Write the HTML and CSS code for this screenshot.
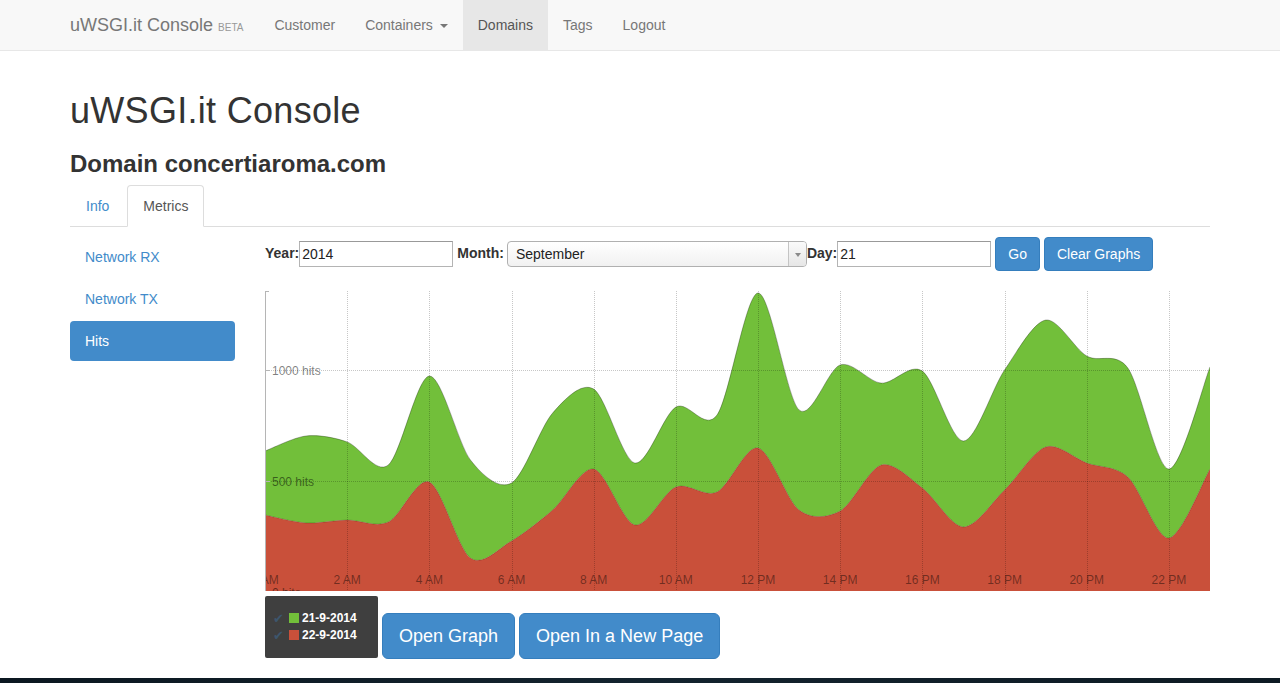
FILE: index.html
```html
<!DOCTYPE html>
<html lang="en">
<head>
<meta charset="utf-8">
<title>uWSGI.it Console</title>
<link rel="stylesheet" href="styles.css">
</head>
<body>
<div class="page">
  <nav class="navbar">
    <div class="container nav-inner">
      <a class="brand" href="#">uWSGI.it Console <small>BETA</small></a>
      <ul class="nav">
        <li><a href="#">Customer</a></li>
        <li><a href="#">Containers <span class="caret"></span></a></li>
        <li class="active"><a href="#">Domains</a></li>
        <li><a href="#">Tags</a></li>
        <li><a href="#">Logout</a></li>
      </ul>
    </div>
  </nav>

  <main class="container main">
    <h1 class="title">uWSGI.it Console</h1>
    <h3 class="subtitle">Domain concertiaroma.com</h3>

    <ul class="tabs">
      <li><a href="#">Info</a></li>
      <li class="active"><a href="#">Metrics</a></li>
    </ul>

    <div class="tab-body">
      <ul class="pills">
        <li><a href="#">Network RX</a></li>
        <li><a href="#">Network TX</a></li>
        <li class="active"><a href="#">Hits</a></li>
      </ul>

      <div class="panel-main">
        <form class="graph-form">
          <label class="lbl">Year:</label><input class="field field-year" type="text" value="2014">
          <label class="lbl lbl-month">Month:</label>
          <span class="select-wrap">
            <select class="select">
              <option>January</option><option>February</option><option>March</option>
              <option>April</option><option>May</option><option>June</option>
              <option>July</option><option>August</option><option selected>September</option>
              <option>October</option><option>November</option><option>December</option>
            </select>
          </span>
          <label class="lbl">Day:</label><input class="field" type="text" value="21">
          <button class="btn btn-go" type="button">Go</button>
          <button class="btn btn-clear" type="button">Clear Graphs</button>
        </form>

        <div class="chart">
          <svg id="chart" class="chart-svg" width="945" height="300" viewBox="0 0 945 300"></svg>
        </div>

        <div class="chart-footer">
          <div class="legend">
            <div class="legend-item"><span class="check">✔</span><span class="swatch swatch-green"></span><span>21-9-2014</span></div>
            <div class="legend-item"><span class="check">✔</span><span class="swatch swatch-red"></span><span>22-9-2014</span></div>
          </div>
          <button class="btn btn-lg" type="button">Open Graph</button>
          <button class="btn btn-lg" type="button">Open In a New Page</button>
        </div>
      </div>
    </div>
  </main>

  <div class="desk-strip"></div>
</div>
<script src="script.js"></script>
</body>
</html>
```

FILE: styles.css
```css
* { box-sizing: border-box; }

body {
  margin: 0;
  font-family: "Liberation Sans", Arial, sans-serif;
  font-size: 14px;
  line-height: 1.42857;
  color: #333;
  background: #fff;
}

a { text-decoration: none; }

.page {
  display: flex;
  flex-direction: column;
  min-height: 100vh;
}

.container {
  width: 1140px;
  margin: 0 auto;
}

/* navbar */
.navbar {
  flex: none;
  height: 51px;
  background: #f8f8f8;
  border-bottom: 1px solid #e7e7e7;
}
.nav-inner {
  display: flex;
  height: 50px;
}
.brand {
  padding: 15px 16px 15px 0;
  font-size: 18px;
  line-height: 20px;
  color: #777;
  white-space: nowrap;
}
.brand small {
  font-size: 10px;
  color: #999;
}
.nav {
  display: flex;
  list-style: none;
  margin: 0;
  padding: 0;
}
.nav a {
  display: block;
  padding: 15px;
  line-height: 20px;
  color: #777;
}
.nav .active a {
  background: #e7e7e7;
  color: #555;
}
.caret {
  display: inline-block;
  width: 0;
  height: 0;
  margin-left: 3px;
  vertical-align: middle;
  border-top: 4px solid;
  border-left: 4px solid transparent;
  border-right: 4px solid transparent;
}

/* main */
.main { flex: 1; }

.title {
  font-size: 36px;
  font-weight: normal;
  letter-spacing: 0.3px;
  line-height: 1.1;
  margin: 40px 0 10px;
}
.subtitle {
  font-size: 24px;
  font-weight: bold;
  line-height: 1.1;
  margin: 20px 0 8px;
}

.tabs {
  display: flex;
  list-style: none;
  margin: 0;
  padding: 0;
  border-bottom: 1px solid #ddd;
}
.tabs li { margin-bottom: -1px; }
.tabs a {
  display: block;
  padding: 10px 15px;
  line-height: 20px;
  margin-right: 2px;
  border: 1px solid transparent;
  border-radius: 4px 4px 0 0;
  color: #428bca;
}
.tabs .active a {
  color: #555;
  background: #fff;
  border-color: #ddd #ddd transparent;
}

.tab-body {
  display: flex;
  gap: 30px;
  margin-top: 10px;
}

.pills {
  flex: none;
  width: 165px;
  list-style: none;
  margin: 0;
  padding: 0;
}
.pills li + li { margin-top: 2px; }
.pills a {
  display: block;
  padding: 10px 15px;
  line-height: 20px;
  border-radius: 4px;
  color: #428bca;
}
.pills .active a {
  background: #428bca;
  color: #fff;
}

.panel-main {
  flex: none;
  width: 945px;
}

/* form */
.graph-form {
  display: flex;
  align-items: center;
  height: 34px;
  margin: 0;
}
.lbl {
  font-weight: bold;
  white-space: nowrap;
}
.field-year { margin-left: 1px; }
.lbl-month { margin-left: 4px; }

.field {
  width: 154px;
  height: 26px;
  margin: 0;
  padding: 1px 2px;
  border: 1px solid #b4b4b4;
  border-top-color: #999;
  font-family: "Liberation Sans", Arial, sans-serif;
  font-size: 14px;
  color: #222;
  background: #fff;
}

.select-wrap {
  position: relative;
  display: inline-block;
  margin-left: 3px;
  width: 300px;
  height: 26px;
}
.select {
  -webkit-appearance: none;
  appearance: none;
  width: 300px;
  height: 26px;
  margin: 0;
  padding: 0 24px 0 8px;
  border: 1px solid #b0b0b0;
  border-radius: 4px;
  background: linear-gradient(#ffffff, #f1f1f1);
  font-family: "Liberation Sans", Arial, sans-serif;
  font-size: 14px;
  color: #222;
}
.select-wrap::after {
  content: "";
  position: absolute;
  top: 1px;
  right: 1px;
  width: 17px;
  height: 24px;
  border-left: 1px solid #c4c4c4;
  border-radius: 0 3px 3px 0;
  background: linear-gradient(#fafafa, #e6e6e6);
  pointer-events: none;
}
.select-wrap::before {
  content: "";
  position: absolute;
  z-index: 1;
  top: 12px;
  right: 6px;
  border-top: 4px solid #8a8a8a;
  border-left: 3px solid transparent;
  border-right: 3px solid transparent;
  pointer-events: none;
}

.btn {
  display: inline-block;
  margin: 0;
  padding: 6px 12px;
  border: 1px solid #357ebd;
  border-radius: 4px;
  background: #428bca;
  color: #fff;
  font-family: "Liberation Sans", Arial, sans-serif;
  font-size: 14px;
  line-height: 20px;
  white-space: nowrap;
  cursor: pointer;
}
.btn-go { margin-left: 4px; }
.btn-clear { margin-left: 4px; }
.btn-lg {
  padding: 10px 16px;
  font-size: 18px;
  line-height: 24px;
  border-radius: 6px;
}

/* chart */
.chart {
  margin-top: 20px;
  height: 300px;
}
.chart-svg {
  display: block;
  overflow: hidden;
  font-family: "Liberation Sans", Arial, sans-serif;
}
.area-green { fill: #72bf3a; }
.area-red { fill: #c9503a; }
.line-green { fill: none; stroke: rgba(0, 0, 0, 0.28); stroke-width: 1; }
.line-red { fill: none; stroke: rgba(0, 0, 0, 0.18); stroke-width: 1; }
.grid { stroke: rgba(0, 0, 0, 0.22); stroke-width: 1; stroke-dasharray: 1 1; shape-rendering: crispEdges; }
.axis { stroke: #b5b5b5; stroke-width: 1; shape-rendering: crispEdges; }
.ylabel { font-size: 12px; fill: rgba(0, 0, 0, 0.5); }
.xlabel { font-size: 12px; fill: rgba(0, 0, 0, 0.45); }

.chart-footer {
  display: flex;
  align-items: flex-end;
  gap: 4px;
  margin-top: 5px;
}
.chart-footer .btn-lg { margin-bottom: -1px; }
.legend {
  flex: none;
  width: 113px;
  height: 62px;
  padding: 14px 0 0 8px;
  background: #3f3f3f;
  border-radius: 2px;
  color: #fff;
  font-size: 12px;
  font-weight: bold;
}
.legend-item {
  display: flex;
  align-items: center;
  height: 17px;
  line-height: 17px;
}
.check {
  width: 16px;
  font-family: "DejaVu Sans", sans-serif;
  font-size: 13px;
  font-weight: normal;
  color: #3d566d;
}
.swatch {
  width: 10px;
  height: 10px;
  margin-right: 3px;
}
.swatch-green { background: #72bf3a; }
.swatch-red { background: #c9503a; }

.desk-strip {
  flex: none;
  height: 5px;
  background: linear-gradient(90deg, #0b1720, #13232e 50%, #0d1a23);
}
```

FILE: script.js
```js
(function () {
  var W = 945, H = 300;
  var red = [347,311,324,315,495,153,230,369,554,302,473,450,649,369,365,572,468,293,459,653,581,518,243,554];
  var total = [635,703,676,572,973,595,491,806,914,581,833,797,1347,820,1023,941,995,680,1000,1225,1063,1009,554,1014];
  var n = red.length;
  var step = W / (n - 1);

  function Y(v) { return 301 - v * 0.222; }
  function pts(vals) { return vals.map(function (v, i) { return [i * step, Y(v)]; }); }
  function f(x) { return Math.round(x * 100) / 100; }

  function segs(p) {
    var a = 0.15, m = p.length, t = [], s = '';
    for (var i = 0; i < m; i++) {
      var p0 = p[Math.max(i - 1, 0)], p2 = p[Math.min(i + 1, m - 1)];
      t.push([a * (p2[0] - p0[0]), a * (p2[1] - p0[1])]);
    }
    for (var j = 1; j < m; j++) {
      s += 'C' + f(p[j-1][0] + t[j-1][0]) + ',' + f(p[j-1][1] + t[j-1][1]) + ' ' +
           f(p[j][0] - t[j][0]) + ',' + f(p[j][1] - t[j][1]) + ' ' +
           f(p[j][0]) + ',' + f(p[j][1]);
    }
    return s;
  }

  var svg = document.getElementById('chart');
  var NS = 'http://www.w3.org/2000/svg';
  function el(name, attrs, text) {
    var e = document.createElementNS(NS, name);
    for (var k in attrs) e.setAttribute(k, attrs[k]);
    if (text) e.textContent = text;
    svg.appendChild(e);
    return e;
  }

  var topPts = pts(total);
  var redPts = pts(red);
  var redRev = redPts.slice().reverse();

  var greenD = 'M' + f(topPts[0][0]) + ',' + f(topPts[0][1]) + segs(topPts) +
    'L' + f(redRev[0][0]) + ',' + f(redRev[0][1]) + segs(redRev) + 'Z';
  var redD = 'M' + f(redPts[0][0]) + ',' + f(redPts[0][1]) + segs(redPts) +
    'L' + W + ',' + (H + 5) + 'L0,' + (H + 5) + 'Z';

  el('path', { d: greenD, 'class': 'area-green' });
  el('path', { d: redD, 'class': 'area-red' });
  el('path', { d: 'M' + f(topPts[0][0]) + ',' + f(topPts[0][1]) + segs(topPts), 'class': 'line-green' });
  el('path', { d: 'M' + f(redPts[0][0]) + ',' + f(redPts[0][1]) + segs(redPts), 'class': 'line-red' });

  var labels = ['0 AM','2 AM','4 AM','6 AM','8 AM','10 AM','12 PM','14 PM','16 PM','18 PM','20 PM','22 PM'];
  for (var h = 0; h < n; h += 2) {
    var x = Math.round(h * step) + 0.5;
    if (h > 0) el('line', { x1: x, y1: 0, x2: x, y2: H, 'class': 'grid' });
    el('text', { x: h * step, y: 293, 'text-anchor': 'middle', 'class': 'xlabel' }, labels[h / 2]);
  }

  [1000, 500, 0].forEach(function (v) {
    var y = Math.round(Y(v)) + 0.5;
    el('line', { x1: 0, y1: y, x2: W, y2: y, 'class': 'grid' });
    el('line', { x1: 0, y1: y, x2: 5, y2: y, 'class': 'axis' });
    el('text', { x: 7, y: y + 4, 'class': 'ylabel' }, v + ' hits');
  });

  el('line', { x1: 0.5, y1: 0, x2: 0.5, y2: H, 'class': 'axis' });
  el('line', { x1: 0, y1: 0.5, x2: 4, y2: 0.5, 'class': 'axis' });
})();
```
